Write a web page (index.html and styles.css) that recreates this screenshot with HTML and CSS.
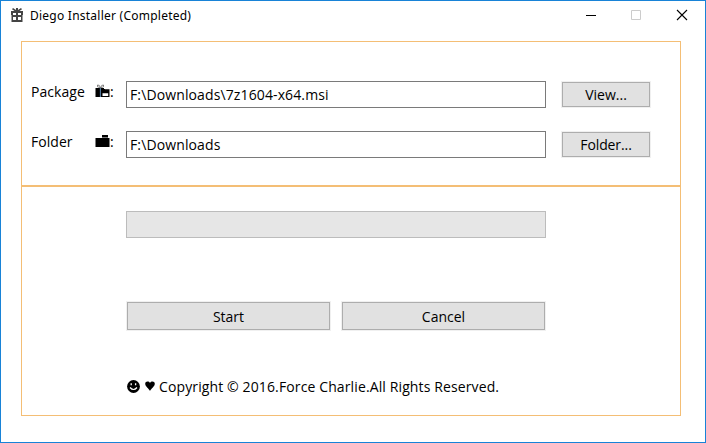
FILE: index.html
```html
<!DOCTYPE html>
<html lang="en">
<head>
<meta charset="utf-8">
<title>Diego Installer</title>
<link rel="stylesheet" href="styles.css">
</head>
<body>
<div class="window">
  <header class="titlebar">
    <svg class="app-icon" width="12" height="14" viewBox="0 0 12 14"><path fill="#444" d="M0 3h3.500L1 1.300 2 0l3 2V0h2v2l3-2 1 1.300L8.500 3H12v4H0zM.5 7h11v7H.5z"/><path fill="#fff" d="M2 5h3v2H2zM7 5h3v2H7zM2 9h3v3H2zM7 9h3v3H7z"/></svg>
    <span class="title">Diego Installer (Completed)</span>
    <div class="controls">
      <svg width="46" height="30" viewBox="0 0 46 30"><path d="M17 14.500h10" stroke="#000"/></svg>
      <svg width="46" height="30" viewBox="0 0 46 30"><path d="M16.500 9.500h9v9h-9z" fill="none" stroke="#ccc"/></svg>
      <svg width="46" height="30" viewBox="0 0 46 30"><path d="M16 9l10 10M26 9l-10 10" fill="none" stroke="#000" stroke-width="1.100"/></svg>
    </div>
  </header>
  <main class="panels">
    <section class="panel source">
      <div class="row">
        <span class="label">Package</span>
        <span class="mark"><svg width="15" height="14" viewBox="0 0 15 14"><path d="M.5 4H5v9H.5zM5.500 4H9v9H5.500zM9 5h5.500v8H9z"/><path fill="#fff" d="M7.500 9.200h5.700V12H7.500zM10 4h5v1.200h-5z"/><path d="M5.500 4Q1 3 2.500 1 4.500.300 5.500 4 6.500.300 8.500 1 10 3 5.500 4" fill="none" stroke="#666" stroke-width=".8"/><path d="M5.300 4v9" stroke="#2d6fae" stroke-width=".7"/></svg>:</span>
        <input class="field" type="text" value="F:\Downloads\7z1604-x64.msi">
        <button class="button"><span>View...</span></button>
      </div>
      <div class="row">
        <span class="label">Folder</span>
        <span class="mark"><svg width="15" height="14" viewBox="0 0 15 14"><path d="M.5 4h14v9H.5zM7 1h6v2H7z"/><path d="M7 3h6v1H7z" fill="#777"/></svg>:</span>
        <input class="field" type="text" value="F:\Downloads">
        <button class="button browse"><span>Folder...</span></button>
      </div>
    </section>
    <section class="panel progress">
      <div class="bar"></div>
      <div class="actions">
        <button class="button"><span>Start</span></button>
        <button class="button"><span>Cancel</span></button>
      </div>
      <footer class="footer">
        <svg width="13" height="13" viewBox="0 0 13 13"><circle cx="6.500" cy="6.500" r="6.400"/><path d="M4.200 3.300v2M8.600 3.300v2" stroke="#fff" stroke-width="1.300"/><path d="M3 7.500Q6.500 11.500 10 7.500" fill="none" stroke="#fff" stroke-width="1.200"/></svg>
        <svg class="heart" width="10" height="10" viewBox="0 0 10 10"><path d="M5 10C3.800 7.500.2 5.500.2 2.800.2.200 3.800-.4 5 2 6.200-.4 9.800.2 9.800 2.800 9.800 5.500 6.200 7.500 5 10z"/></svg>
        <span class="copyright">Copyright © 2016.Force Charlie.All Rights Reserved.</span>
      </footer>
    </section>
  </main>
</div>
</body>
</html>
```
FILE: styles.css
```css
* { box-sizing: border-box; }
body { margin: 0; background: #fff; color: #000; font: 14px/20px "Open Sans", "Noto Sans", sans-serif; }
svg { display: block; flex: none; }
.window { width: 706px; height: 443px; border: 1px solid #1883d7; background: #fff; overflow: hidden; }
.titlebar { display: flex; height: 40px; padding-left: 10px; }
.app-icon { margin-top: 7px; }
.title { margin: 5px 0 0 7px; font-family: "Noto Sans", sans-serif; font-size: 12px; letter-spacing: 0.24px; white-space: nowrap; }
.controls { display: flex; margin-left: auto; margin-right: -2px; }
.panels { margin: 0 24px 0 20px; }
.panel { width: 660px; border: 1px solid #f4be75; }
.source { height: 145px; padding: 39px 29px 0 9px; }
.row { display: grid; grid-template-columns: 64px 31px 420px 90px; height: 50px; align-items: start; }
.row .button { margin-left: 15px; width: 90px; height: 27px; }
.label, .mark { margin-top: 1px; white-space: nowrap; }
.label { letter-spacing: 0.05px; }
.mark { display: flex; }
.mark svg { margin-top: 2px; }
.field { width: 420px; height: 27px; margin: 0; padding: 0 3px 1px; border: 1px solid #7a7a7a; background: #fff; color: inherit; font: inherit; letter-spacing: 0.12px; outline: none; }
.button { display: flex; align-items: center; justify-content: center; padding: 0; border: 1px solid #f0f0f0; background: #e1e1e1; box-shadow: inset 0 0 0 1px #adadad; color: inherit; font: inherit; }
.browse { letter-spacing: -0.1px; }
.progress { height: 230px; padding: 24px 134px 0 104px; }
.bar { width: 420px; height: 27px; border: 1px solid #bcbcbc; background: #e6e6e6; }
.actions { display: flex; gap: 10px; margin-top: 63px; }
.actions .button { width: 205px; height: 30px; padding-top: 2px; }
.footer { display: flex; align-items: center; height: 20px; margin: 46px -30px 0 1px; white-space: nowrap; }
.footer svg { margin-bottom: 2px; }
.footer .heart { margin: 0 4px 2px 5px; }
.copyright { letter-spacing: 0.12px; }
```
